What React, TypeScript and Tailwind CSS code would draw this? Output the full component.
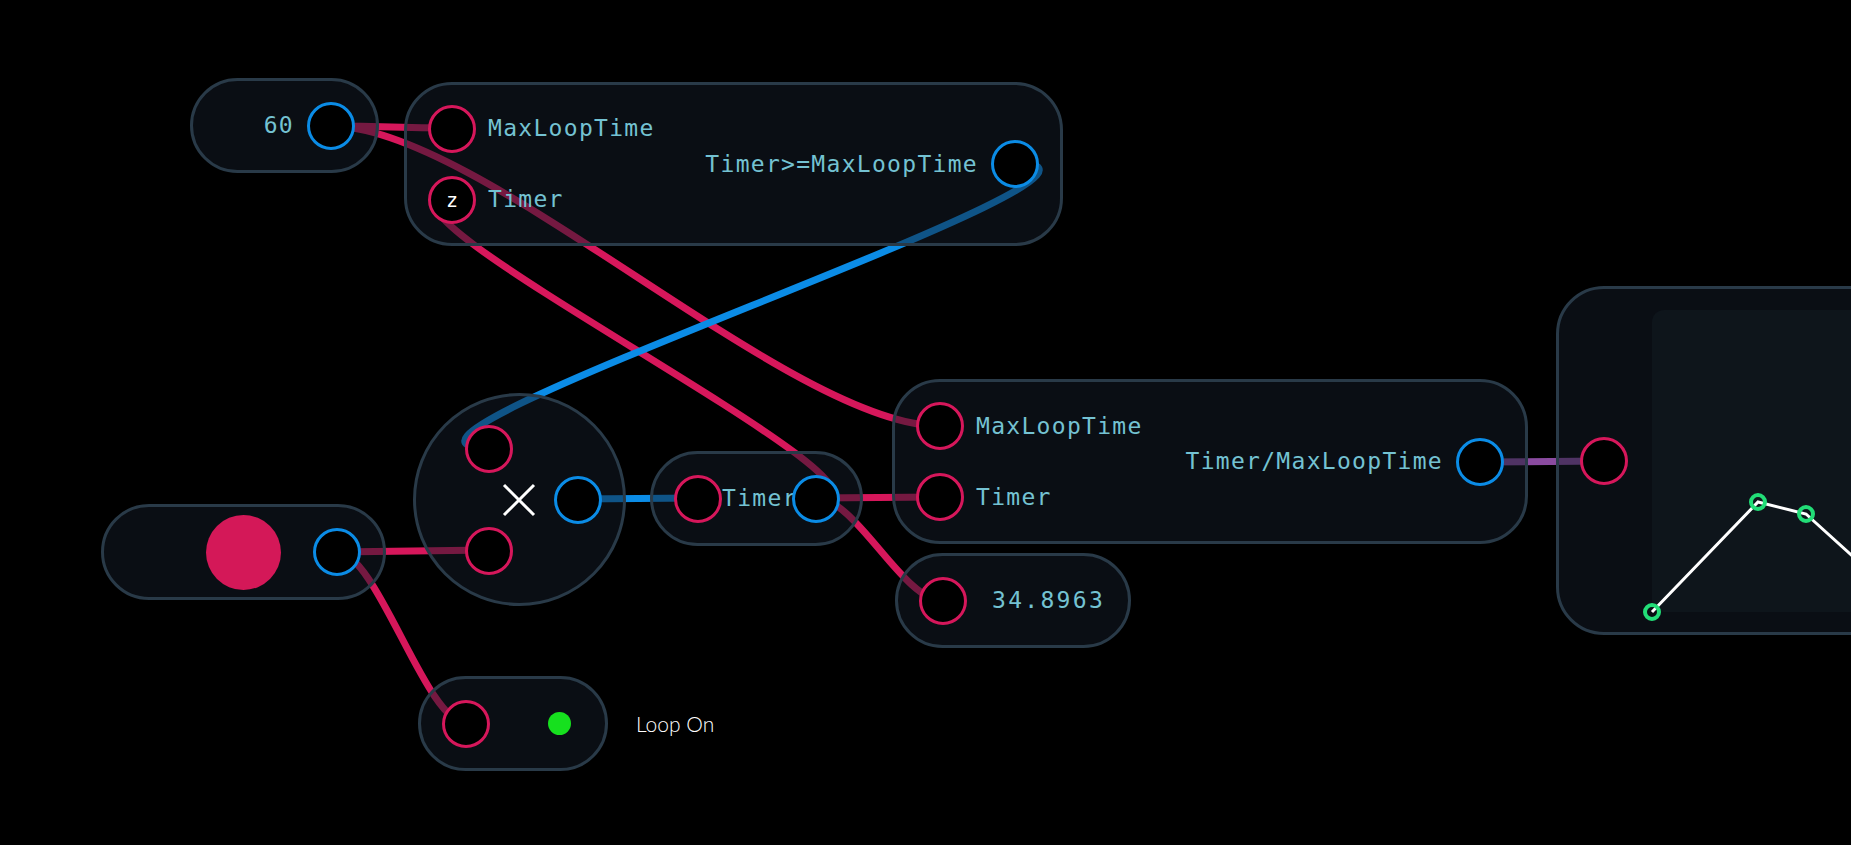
import React from "react";
import clsx from "clsx";

const PINK = "#d6175b";
const BLUE = "#0b8ce6";
const PURPLE = "#8a4ba0";

const nodeBase =
  "absolute border-[3px] border-[#293a48] bg-[rgba(20,28,40,0.5)]";
const label =
  "font-['DejaVu_Sans_Mono',monospace] text-[23px] leading-none tracking-[1.3px] text-[#74c2d2] whitespace-nowrap";

function Port({ out, children }: { out?: boolean; children?: React.ReactNode }) {
  return (
    <div
      className={clsx(
        "flex h-12 w-12 shrink-0 items-center justify-center rounded-full border-[3px] bg-black",
        out ? "border-[#0b8ce6]" : "border-[#d6175b]"
      )}
    >
      {children}
    </div>
  );
}

function Wires() {
  const wires = [
    { d: "M331,126 C391,126 392,128 452,128", c: PINK },
    { d: "M331,126 C481,126 790,426 940,426", c: PINK },
    { d: "M816,498 C936,498 332,199 452,199", c: PINK },
    { d: "M816,498 L940,497", c: PINK },
    { d: "M816,498 C856,498 903,601 943,601", c: PINK },
    { d: "M1015,163 C1195,163 309,448 489,448", c: BLUE },
    { d: "M578,499 L698,498", c: BLUE },
    { d: "M337,552 L489,550", c: PINK },
    { d: "M337,552 C377,552 426,723 466,723", c: PINK },
    { d: "M1480,462 L1604,461", c: PURPLE },
  ];
  return (
    <svg className="absolute left-0 top-0" width={1851} height={845}>
      {wires.map((w, i) => (
        <path key={i} d={w.d} stroke={w.c} strokeWidth={7} fill="none" />
      ))}
    </svg>
  );
}

function Chart() {
  const pts = [
    [0, 302],
    [106, 192],
    [154, 204],
    [240, 282],
  ];
  return (
    <svg className="h-full w-full overflow-visible">
      <polyline
        points={pts.map((p) => p.join(",")).join(" ")}
        fill="none"
        stroke="#ffffff"
        strokeWidth={3}
      />
      {pts.slice(0, 3).map((p, i) => (
        <circle key={i} cx={p[0]} cy={p[1]} r={7} fill="none" stroke="#22dd77" strokeWidth={4} />
      ))}
    </svg>
  );
}

export default function App() {
  return (
    <div className="relative h-[845px] w-[1851px] overflow-hidden bg-black">
      <Wires />

      {/* constant */}
      <div
        className={clsx(
          nodeBase,
          "left-[190px] top-[78px] flex h-[95px] w-[189px] items-center justify-end gap-[13px] rounded-full pr-[21px]"
        )}
      >
        <span className={label}>60</span>
        <Port out />
      </div>

      {/* compare */}
      <div
        className={clsx(
          nodeBase,
          "left-[404px] top-[82px] flex h-[164px] w-[659px] items-center justify-between rounded-[48px] px-[21px]"
        )}
      >
        <div className="flex flex-col gap-[23px]">
          <div className="flex items-center gap-3">
            <Port />
            <span className={label}>MaxLoopTime</span>
          </div>
          <div className="flex items-center gap-3">
            <Port>
              <span className="font-['DejaVu_Sans_Mono',monospace] text-[20px] leading-none text-white">
                z
              </span>
            </Port>
            <span className={label}>Timer</span>
          </div>
        </div>
        <div className="flex items-center gap-[13px]">
          <span className={label}>Timer&gt;=MaxLoopTime</span>
          <Port out />
        </div>
      </div>

      {/* multiply */}
      <div
        className={clsx(
          nodeBase,
          "left-[413px] top-[393px] flex h-[213px] w-[213px] items-center rounded-full pl-[49px]"
        )}
      >
        <div className="flex flex-col gap-[54px]">
          <Port />
          <Port />
        </div>
        <svg className="ml-[-11px] shrink-0" width={34} height={34}>
          <path d="M2,2 L32,32 M32,2 L2,32" stroke="#ffffff" strokeWidth={3} />
        </svg>
        <div className="ml-[18px]">
          <Port out />
        </div>
      </div>

      {/* switch */}
      <div
        className={clsx(
          nodeBase,
          "left-[101px] top-[504px] flex h-[96px] w-[285px] items-center justify-end gap-[32px] rounded-full pr-[22px]"
        )}
      >
        <div className="h-[75px] w-[75px] rounded-full bg-[#d41858]" />
        <Port out />
      </div>

      {/* timer */}
      <div
        className={clsx(
          nodeBase,
          "left-[650px] top-[451px] flex h-[95px] w-[213px] items-center rounded-full pl-[21px]"
        )}
      >
        <Port />
        <span className={label}>Timer</span>
        <div className="ml-[-6px]">
          <Port out />
        </div>
      </div>

      {/* divide */}
      <div
        className={clsx(
          nodeBase,
          "left-[892px] top-[379px] flex h-[165px] w-[636px] items-center justify-between rounded-[48px] px-[21px]"
        )}
      >
        <div className="flex flex-col gap-[23px]">
          <div className="flex items-center gap-3">
            <Port />
            <span className={label}>MaxLoopTime</span>
          </div>
          <div className="flex items-center gap-3">
            <Port />
            <span className={label}>Timer</span>
          </div>
        </div>
        <div className="flex items-center gap-[13px]">
          <span className={label}>Timer/MaxLoopTime</span>
          <Port out />
        </div>
      </div>

      {/* readout */}
      <div
        className={clsx(
          nodeBase,
          "left-[895px] top-[553px] flex h-[95px] w-[236px] items-center gap-[25px] rounded-full pl-[21px]"
        )}
      >
        <Port />
        <span className={clsx(label, "tracking-[2.3px]")}>34.8963</span>
      </div>

      {/* loop indicator */}
      <div className="absolute left-[418px] top-[676px] flex items-center gap-[28px]">
        <div className="flex h-[95px] w-[190px] items-center gap-[58px] rounded-full border-[3px] border-[#293a48] bg-[rgba(20,28,40,0.5)] pl-[21px]">
          <Port />
          <div className="h-[23px] w-[23px] rounded-full bg-[#16e01e]" />
        </div>
        <span className="font-['Lato',sans-serif] text-[21px] font-light text-white">Loop On</span>
      </div>

      {/* plot */}
      <div
        className={clsx(
          nodeBase,
          "left-[1556px] top-[286px] flex h-[349px] w-[700px] items-center gap-[24px] rounded-[48px] pl-[21px]"
        )}
      >
        <Port />
        <div className="h-[302px] w-[560px] rounded-[12px] bg-[#0e151b]">
          <Chart />
        </div>
      </div>
    </div>
  );
}
